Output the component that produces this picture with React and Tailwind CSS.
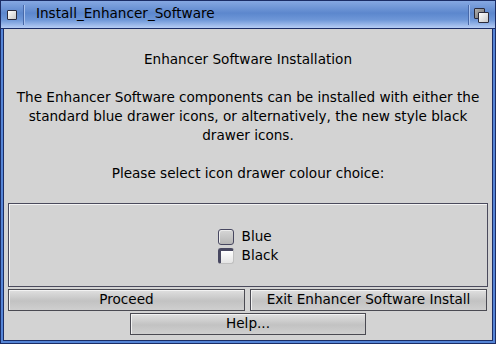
export default function App() {
  const font = { fontFamily: '"DejaVu Sans", "Liberation Sans", sans-serif' };
  return (
    <div className="w-[496px] h-[344px] bg-[#1b2d66] p-px flex flex-col text-[13.6px] text-black" style={font}>
      {/* Title bar */}
      <div className="h-[28px] flex items-center bg-[linear-gradient(to_bottom,#86a8e2_0%,#5c87cd_45%,#6e97d8_70%,#b6cdf5_100%)] border-b border-[#1b2d66]">
        <div className="w-[22px] h-full flex items-center justify-center">
          <div className="w-[10px] h-[10px] border border-[#2a2a3a] bg-[linear-gradient(to_bottom_right,#ffffff,#c8c8c8)] rounded-[1px]" />
        </div>
        <div className="w-px h-[20px] bg-[#4768a8] shadow-[1px_0_0_#a9c2ee]" />
        <div className="ml-[12px] flex-1 leading-none pb-px">Install_Enhancer_Software</div>
        <div className="w-px h-[20px] bg-[#4768a8] shadow-[1px_0_0_#a9c2ee]" />
        <div className="w-[26px] h-full relative">
          <div className="absolute left-[5px] top-[7px] w-[11px] h-[11px] border border-[#2a2a3a] bg-[linear-gradient(to_bottom_right,#b0b0b0,#707070)] rounded-[1px]" />
          <div className="absolute left-[9px] top-[11px] w-[11px] h-[11px] border border-[#2a2a3a] bg-[linear-gradient(to_bottom_right,#ffffff,#c8c8c8)] rounded-[1px]" />
        </div>
      </div>
      {/* Body frame */}
      <div className="flex-1 bg-[#5585d6] px-[2px] pb-[2px] flex flex-col">
        <div className="flex-1 bg-[#1b2d66] px-px pb-px flex flex-col">
          <div className="flex-1 bg-[#d3d3d3] flex flex-col px-[4px]">
            <div className="pt-[21px] text-center leading-[19px] h-[174px] shrink-0">
              <div>Enhancer Software Installation</div>
              <div className="h-[19px]" />
              <div>The Enhancer Software components can be installed with either the</div>
              <div>standard blue drawer icons, or alternatively, the new style black</div>
              <div>drawer icons.</div>
              <div className="h-[19px]" />
              <div>Please select icon drawer colour choice:</div>
            </div>
            {/* Group box */}
            <div className="h-[84px] shrink-0 border border-[#4a4a5c] shadow-[inset_1px_1px_0_#f4f4f4] flex flex-col items-center justify-center pt-[2px]">
              <div className="flex flex-col gap-[3px]">
                <div className="flex items-center gap-[8px] h-[16px]">
                  <div className="w-[16px] h-[16px] rounded-[3px] border border-[#474760] bg-[linear-gradient(to_bottom,#d6d6d6,#b6b6b6)] shadow-[inset_1px_1px_0_#ececec]" />
                  <span className="leading-none">Blue</span>
                </div>
                <div className="flex items-center gap-[8px] h-[16px]">
                  <div className="w-[16px] h-[16px] rounded-[3px] border border-[#c0c0c0] border-l-[3px] border-t-[3px] border-l-[#474760] border-t-[#474760] bg-[linear-gradient(to_bottom,#ffffff,#e4e4e4)]" />
                  <span className="leading-none">Black</span>
                </div>
              </div>
            </div>
            <div className="mt-[2px] flex gap-[5px] pr-px shrink-0">
              <Btn>Proceed</Btn>
              <Btn>Exit Enhancer Software Install</Btn>
            </div>
            <div className="mt-[2px] flex justify-center shrink-0">
              <div className="w-[236px] flex"><Btn>Help...</Btn></div>
            </div>
          </div>
        </div>
      </div>
    </div>
  );
}

function Btn({ children }) {
  return (
    <div className="flex-1 h-[22px] border border-[#4a4a52] bg-[linear-gradient(to_bottom,#e0e0e0,#c2c2c2_55%,#cfcfcf)] shadow-[inset_1px_1px_0_#f2f2f2] flex items-center justify-center leading-none">
      {children}
    </div>
  );
}
